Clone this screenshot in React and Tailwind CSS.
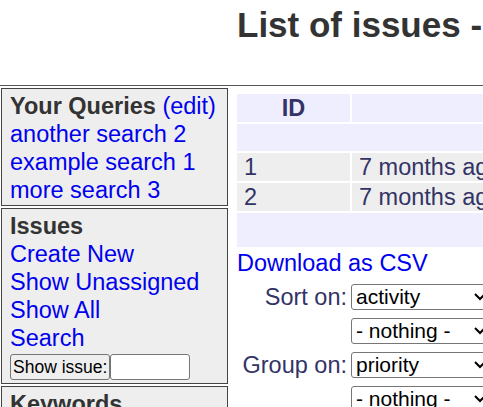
export default function App() {
  const sel = 'h-[26px] w-[140px] rounded-[3px] border border-[#767676] bg-white px-1 text-[21px] leading-[24px] text-black flex items-center justify-between'
  const Select = ({ v }) => (
    <div className={sel}>
      <span>{v}</span>
      <svg width="12" height="8" viewBox="0 0 12 8"><path d="M1 1l5 5 5-5" fill="none" stroke="#000" strokeWidth="2" /></svg>
    </div>
  )
  return (
    <div className="w-[483px] h-[407px] overflow-hidden bg-white text-[23.5px] leading-[28px] text-[#333366]" style={{ fontFamily: 'Arial, "Liberation Sans", sans-serif' }}>
      <div className="h-[85px] pl-[237px] pt-[6px] whitespace-nowrap">
        <h1 className="text-[35px] leading-[38px] font-bold text-[#333]">List of issues - Tracker</h1>
      </div>
      <div className="h-px bg-[#555] w-full" />
      <div className="flex gap-[9px] pt-[2px] pl-px">
        <div className="w-[227px] shrink-0 flex flex-col gap-[2px]">
          <div className="border border-[#444] bg-[#eee] px-[8px] pt-[3px] pb-[1px]">
            <div className="text-[#333] font-bold">Your Queries <span className="font-normal text-[#00e]">(edit)</span></div>
            <div className="text-[#00e]">another search 2</div>
            <div className="text-[#00e]">example search 1</div>
            <div className="text-[#00e]">more search 3</div>
          </div>
          <div className="border border-[#444] bg-[#eee] px-[8px] pt-[3px] pb-[3px]">
            <div className="text-[#333] font-bold">Issues</div>
            <div className="text-[#00e]">Create New</div>
            <div className="text-[#00e]">Show Unassigned</div>
            <div className="text-[#00e]">Show All</div>
            <div className="text-[#00e]">Search</div>
            <div className="flex mt-[2px]">
              <div className="h-[26px] rounded-[3px] border border-[#767676] bg-[#efefef] px-[2px] text-[17.5px] leading-[24px] text-black">Show issue:</div>
              <div className="h-[26px] w-[80px] rounded-[3px] border border-[#767676] bg-white" />
            </div>
          </div>
          <div className="border border-[#444] bg-[#eee] px-[8px] pt-[3px] h-[40px]">
            <div className="text-[#333] font-bold">Keywords</div>
          </div>
        </div>
        <div className="flex-1 min-w-0 pt-[6px] whitespace-nowrap">
          <div className="flex flex-col gap-[2px] w-[400px]">
            <div className="flex gap-[2px] h-[28px]">
              <div className="w-[113px] bg-[#eef] text-center font-bold">ID</div>
              <div className="flex-1 bg-[#eef]" />
            </div>
            <div className="h-[27px] bg-[#eef]" />
            <div className="flex gap-[2px] h-[28px]">
              <div className="w-[113px] bg-[#eee] pl-[7px]">1</div>
              <div className="flex-1 bg-[#eee] pl-[7px]">7 months ago</div>
            </div>
            <div className="flex gap-[2px] h-[28px]">
              <div className="w-[113px] bg-[#eee] pl-[7px]">2</div>
              <div className="flex-1 bg-[#eee] pl-[7px]">7 months ago</div>
            </div>
            <div className="h-[34px] bg-[#eef]" />
          </div>
          <div className="text-[#00e] mt-[2px]">Download as CSV</div>
          <div className="grid grid-cols-[110px_140px] gap-x-[4px] gap-y-[7px] mt-[6px] items-center">
            <div className="text-right">Sort on:</div><Select v="activity" />
            <div /><Select v="- nothing -" />
            <div className="text-right">Group on:</div><Select v="priority" />
            <div /><Select v="- nothing -" />
          </div>
        </div>
      </div>
    </div>
  )
}
